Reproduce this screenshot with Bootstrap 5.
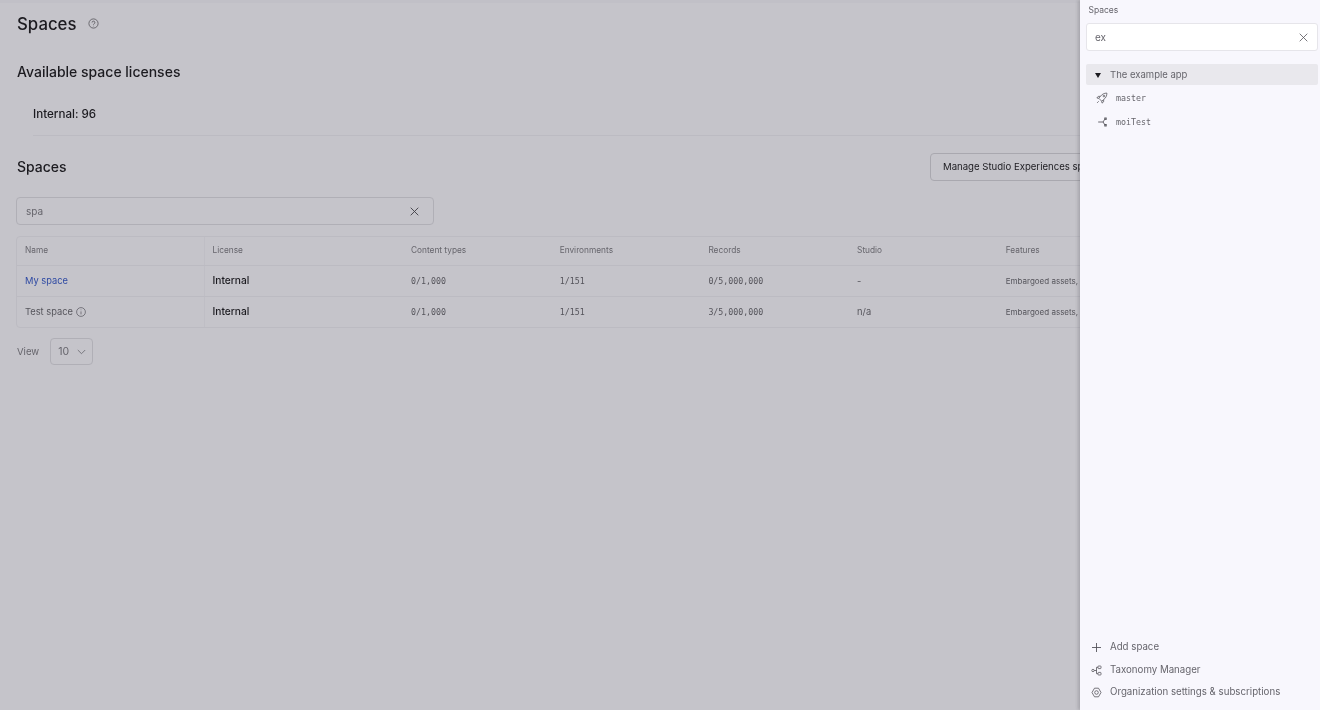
<!DOCTYPE html>
<html lang="en">
<head>
    <meta charset="UTF-8">
    <meta name="viewport" content="width=device-width, initial-scale=1.0">
    <title>Spaces</title>
    <link href="https://cdn.jsdelivr.net/npm/bootstrap@5.3.0/dist/css/bootstrap.min.css" rel="stylesheet">
    <style>
        html, body { height: 100%; overflow: hidden; }
        body { font-family: Inter, "Liberation Sans", sans-serif; background: #c5c4ca; color: #1c1b20; }
        .page-shell { height: 710px; }
        .main-pane { width: 1080px; flex: 0 0 1080px; overflow: hidden; padding: 0 0 0 16px; background: #c5c4ca; filter: blur(.3px); position: relative; }
        .top-strip { height: 3px; margin-left: -16px; background: #c1c0c7; }
        .main-inner { width: 1288px; }
        .page-title { font-size: 16.8px; line-height: 24px; font-weight: 500; margin: 9px 0 0; padding-left: 1px; }
        .help-ico { margin-left: 11px; color: #55545b; }
        .section-title { font-size: 14px; line-height: 20px; font-weight: 500; margin: 0; padding-left: 1px; }
        .licenses-title { margin-top: 26px; }
        .license-line { font-size: 11.6px; font-weight: 500; line-height: 16px; margin: 24px 0 0 17px; border-bottom: 1px solid #bcbbc2; height: 30px; }
        .spaces-head { margin-top: 17px; height: 28px; }
        .spaces-head .section-title { width: 914px; }
        .manage-btn { font-size: 9.6px; font-weight: 400; color: #1c1b20; height: 28px; width: 240px; padding: 0 12px; text-align: left; border: 1px solid #a9a8af; border-radius: 4px; background: transparent; white-space: nowrap; }
        .filter-box { width: 418px; height: 28px; margin-top: 16px; border: 1px solid #b0afb6; border-radius: 4px; padding: 0 14px 0 9px; font-size: 10px; color: #66656c; }
        .grid-wrap { width: 1288px; margin-top: 11px; border: 1px solid #bcbbc2; border-radius: 4px; }
        .spaces-grid { table-layout: fixed; width: 100%; margin: 0; --bs-table-bg: transparent; --bs-table-color: #1c1b20; --bs-table-border-color: #bcbbc2; }
        .spaces-grid th, .spaces-grid td { padding: 0 8px; vertical-align: middle; white-space: nowrap; overflow: hidden; }
        .spaces-grid th { height: 28px; padding-bottom: 2px; font-size: 8.3px; font-weight: 400; color: #66656c; }
        .spaces-grid td { height: 31px; font-size: 9.3px; color: #56555c; }
        .spaces-grid tbody tr:first-child td { padding-top: 1px; }
        .spaces-grid tr:last-child td { border-bottom: 0; }
        .name-col { border-right: 1px solid #bfbec5; }
        .mono-cell { font-family: "DejaVu Sans Mono", "Liberation Mono", monospace; font-size: 8.3px !important; color: #55545b !important; }
        .lic-cell { font-weight: 500; font-size: 10.2px !important; color: #1c1b20 !important; }
        .space-link { color: #2f4aa3; text-decoration: none; }
        .feat-cell { font-size: 8px !important; }
        .view-row { margin-top: 10px; font-size: 9.6px; color: #66656c; padding-left: 1px; }
        .view-row > span { padding-top: 1px; }
        .view-select { width: 43px; height: 27px; margin-left: 11px; border: 1px solid #b0afb6; border-radius: 4px; padding: 1px 6px 0 7px; font-size: 10.5px; }
        .side-pane { width: 240px; flex: 0 0 240px; background: #f8f7fd; box-shadow: -2px 0 3px rgba(60,60,70,.22); position: relative; color: #66656c; filter: blur(.3px); }
        .side-label { font-size: 8.5px; line-height: 12px; padding: 4px 0 0 8.5px; height: 16px; }
        .side-search { height: 28px; margin: 7px 2px 0 6px; background: #fff; border: 1px solid #e6e5ea; border-radius: 3px; padding: 1px 9px 0 8px; font-size: 10px; }
        .tree-head { height: 21px; margin: 13px 2px 0 6px; background: #e9e8ed; border-radius: 2px; padding: 1px 0 0 9px; font-size: 9.5px; }
        .tree-caret { width: 0; height: 0; border-left: 3.5px solid transparent; border-right: 3.5px solid transparent; border-top: 5px solid #1c1b20; margin: 1px 9px 0 0; }
        .tree-first { margin-top: 1px; }
        .tree-item { height: 24px; padding-left: 16px; font-family: "DejaVu Sans Mono", "Liberation Mono", monospace; font-size: 8.3px; }
        .tree-item svg { margin-right: 8px; color: #55545b; }
        .side-foot { position: absolute; left: 0; right: 0; bottom: 6px; }
        .foot-item { height: 22.5px; padding-left: 11px; font-size: 9.7px; }
        .foot-item svg { margin-right: 8px; color: #55545b; }
    </style>
</head>
<body>
    <div class="page-shell d-flex">
        <main class="main-pane">
            <div class="top-strip"></div>
            <div class="main-inner">
                <div class="d-flex align-items-center">
                    <h1 class="page-title">Spaces</h1>
                    <svg class="help-ico mt-2" width="11" height="11" viewBox="0 0 11 11" fill="none" stroke="currentColor" stroke-width=".8"><circle cx="5.5" cy="5.5" r="4.6"/><path d="M4.1 4.5a1.4 1.4 0 1 1 2 1.3c-.4.2-.6.4-.6.9M5.5 7.8v.5"/></svg>
                </div>
                <h2 class="section-title licenses-title">Available space licenses</h2>
                <div class="license-line">Internal: 96</div>
                <div class="spaces-head d-flex align-items-center">
                    <h2 class="section-title">Spaces</h2>
                    <button type="button" class="btn manage-btn">Manage Studio Experiences spaces</button>
                </div>
                <div class="filter-box d-flex align-items-center justify-content-between">
                    <span>spa</span>
                    <svg width="9" height="9" viewBox="0 0 9 9" fill="none" stroke="#3f3e45" stroke-width=".9"><path d="M.7.7l7.6 7.6M8.3.7L.7 8.3"/></svg>
                </div>
                <div class="grid-wrap">
                    <table class="table spaces-grid">
                        <colgroup>
                            <col style="width:187px"><col style="width:199px"><col style="width:148.7px"><col style="width:148.7px"><col style="width:148.7px"><col style="width:148.7px"><col style="width:306px">
                        </colgroup>
                        <thead>
                            <tr><th class="name-col">Name</th><th>License</th><th>Content types</th><th>Environments</th><th>Records</th><th>Studio</th><th>Features</th></tr>
                        </thead>
                        <tbody>
                            <tr>
                                <td class="name-col"><a class="space-link" href="#">My space</a></td>
                                <td class="lic-cell">Internal</td>
                                <td class="mono-cell">0/1,000</td>
                                <td class="mono-cell">1/151</td>
                                <td class="mono-cell">0/5,000,000</td>
                                <td>-</td>
                                <td class="feat-cell">Embargoed assets, Custom roles</td>
                            </tr>
                            <tr>
                                <td class="name-col">Test space <svg width="10" height="10" viewBox="0 0 10 10" fill="none" stroke="currentColor" stroke-width=".7"><circle cx="5" cy="5" r="4.4"/><path d="M5 4.4v3M5 2.6v.6"/></svg></td>
                                <td class="lic-cell">Internal</td>
                                <td class="mono-cell">0/1,000</td>
                                <td class="mono-cell">1/151</td>
                                <td class="mono-cell">3/5,000,000</td>
                                <td>n/a</td>
                                <td class="feat-cell">Embargoed assets, Custom roles</td>
                            </tr>
                        </tbody>
                    </table>
                </div>
                <div class="view-row d-flex align-items-center">
                    <span>View</span>
                    <div class="view-select d-flex align-items-center justify-content-between">
                        <span>10</span>
                        <svg width="9" height="6" viewBox="0 0 9 6" fill="none" stroke="#66656c" stroke-width=".8"><path d="M.8 1l3.7 3.700L8.200 1"/></svg>
                    </div>
                </div>
            </div>
        </main>
        <aside class="side-pane">
            <div class="side-label">Spaces</div>
            <div class="side-search d-flex align-items-center justify-content-between">
                <span>ex</span>
                <svg width="9" height="9" viewBox="0 0 9 9" fill="none" stroke="#55545b" stroke-width=".8"><path d="M.7.7l7.6 7.6M8.3.7L.7 8.3"/></svg>
            </div>
            <div class="tree-head d-flex align-items-center">
                <span class="tree-caret"></span>
                <span>The example app</span>
            </div>
            <div class="tree-item tree-first d-flex align-items-center">
                <svg width="12" height="12" viewBox="0 0 11 11" fill="none" stroke="currentColor" stroke-width=".7"><path d="M10 1C7.500 1 5.500 2 4 4L2.600 5.800l2.600 2.600L7 7c2-1.500 3-3.500 3-6z"/><path d="M4 4H2L.8 5.500l1.800.300M7 7v2L5.500 10.200l-.300-1.800M2.500 8.500L1 10"/><circle cx="7.300" cy="3.700" r=".8"/></svg>
                <span>master</span>
            </div>
            <div class="tree-item d-flex align-items-center">
                <svg width="12" height="12" viewBox="0 0 11 11" fill="none" stroke="currentColor" stroke-width=".8"><path d="M2 5.500h4.500M6.500 5.500L8 3M6.500 5.500L8 8"/><rect x="8" y="1.800" width="1.400" height="1.400"/><rect x="8" y="7.800" width="1.400" height="1.400"/></svg>
                <span>moiTest</span>
            </div>
            <div class="side-foot">
                <div class="foot-item d-flex align-items-center">
                    <svg width="11" height="11" viewBox="0 0 11 11" fill="none" stroke="currentColor" stroke-width=".9"><path d="M5.500 1v9M1 5.500h9"/></svg>
                    <span>Add space</span>
                </div>
                <div class="foot-item d-flex align-items-center">
                    <svg width="11" height="11" viewBox="0 0 11 11" fill="none" stroke="currentColor" stroke-width=".8"><circle cx="2" cy="5.500" r="1.200"/><rect x="7" y="1" width="3" height="2.600" rx=".6"/><rect x="7" y="7.400" width="3" height="2.600" rx=".6"/><path d="M3.200 5.500h2.300M5.500 2.300v6.400M5.500 2.300H7M5.500 8.700H7"/></svg>
                    <span>Taxonomy Manager</span>
                </div>
                <div class="foot-item d-flex align-items-center">
                    <svg width="11" height="11" viewBox="0 0 11 11" fill="none" stroke="currentColor" stroke-width=".8"><path d="M3.500 1.200h4L10 5.500l-2.500 4.300h-4L1 5.500z" stroke-linejoin="round"/><circle cx="5.500" cy="5.500" r="1.800"/></svg>
                    <span>Organization settings &amp; subscriptions</span>
                </div>
            </div>
        </aside>
    </div>
    <script src="https://cdn.jsdelivr.net/npm/bootstrap@5.3.0/dist/js/bootstrap.bundle.min.js"></script>
</body>
</html>
